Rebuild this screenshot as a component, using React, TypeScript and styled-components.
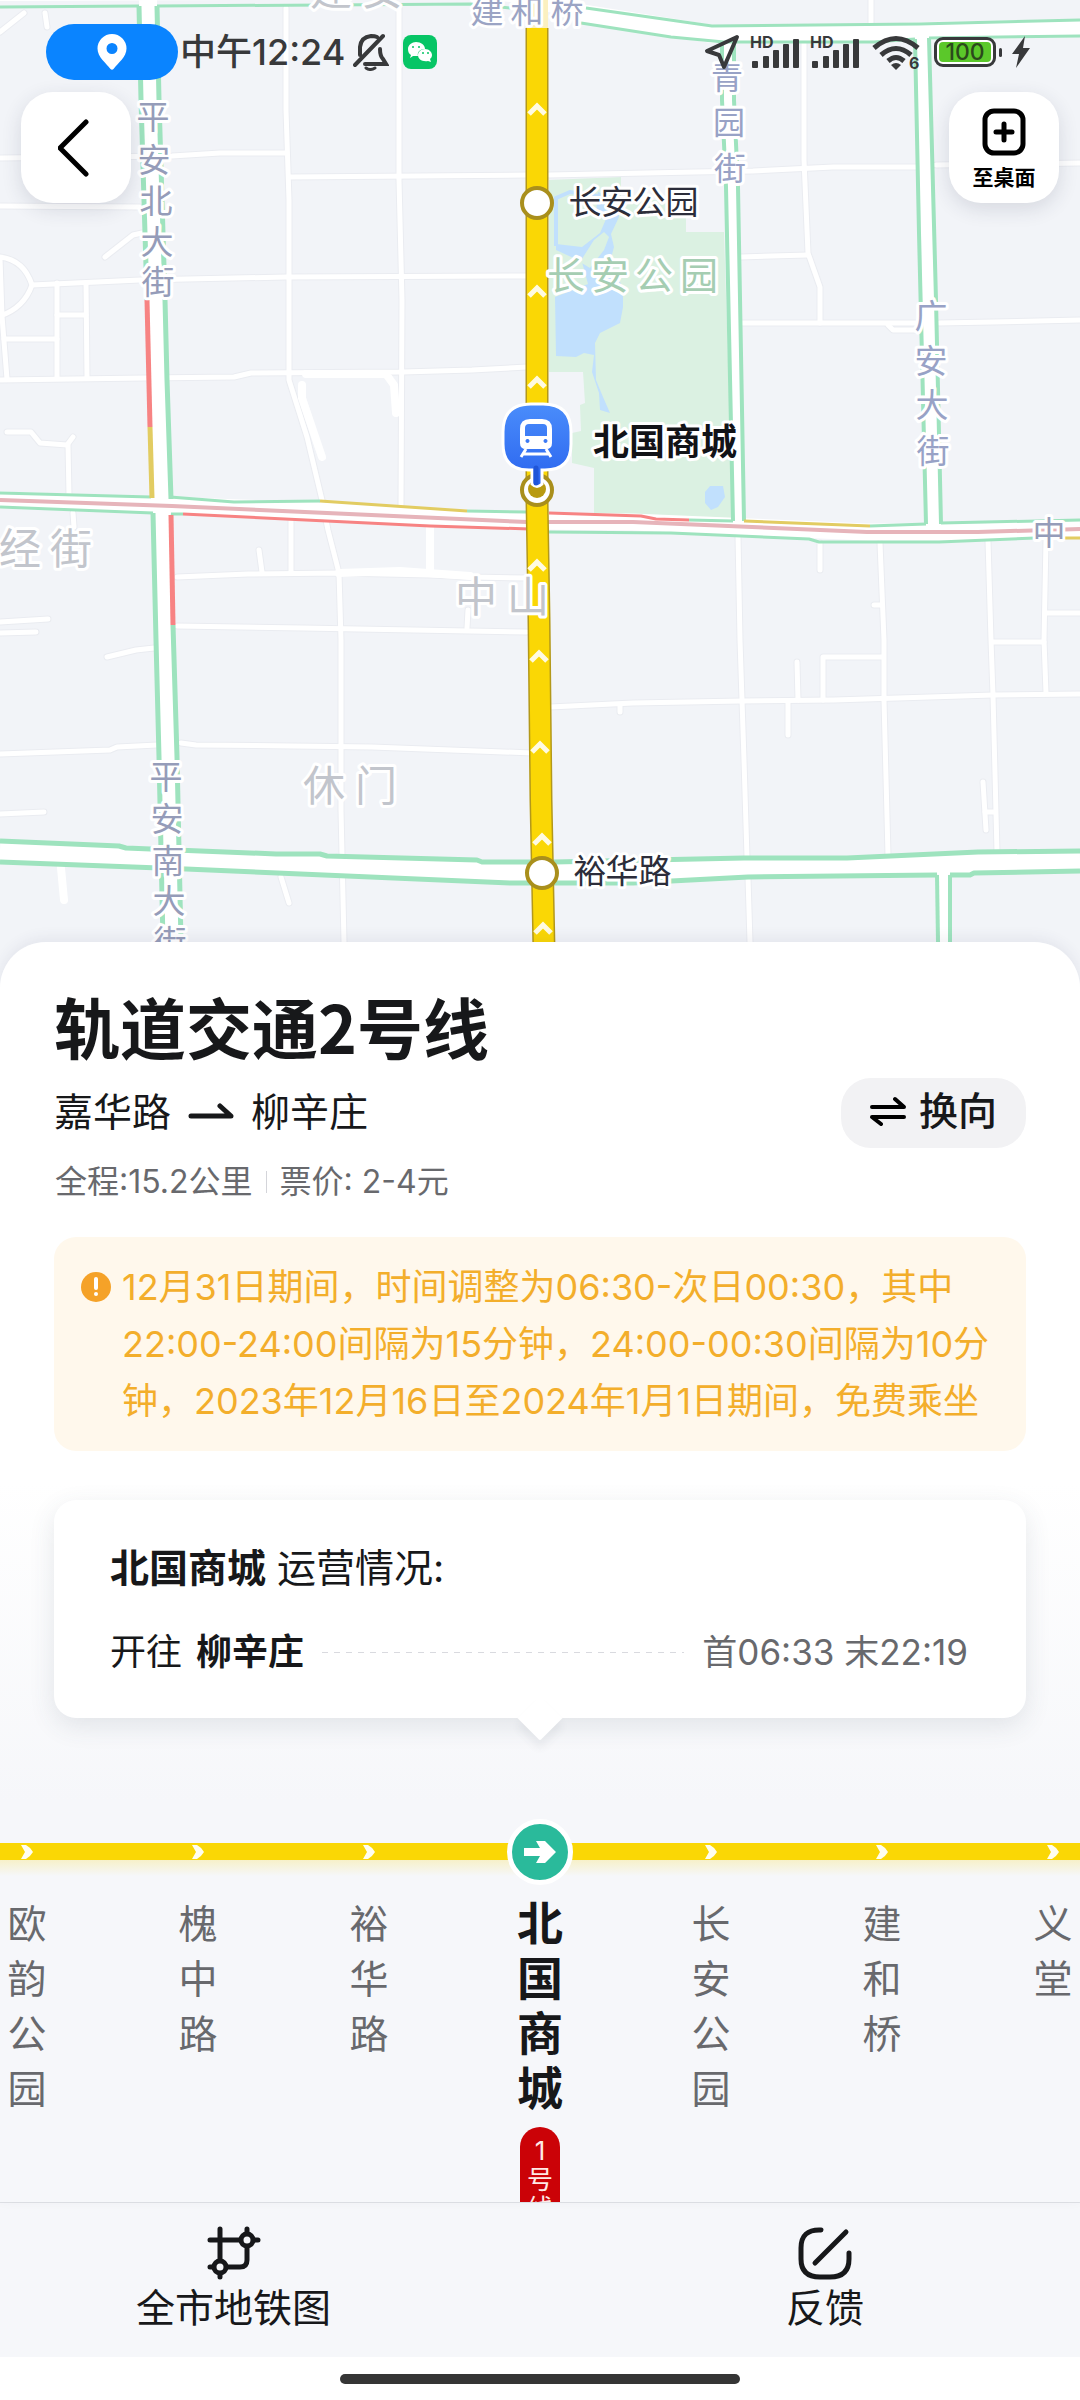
import React from "react";
import styled, { createGlobalStyle } from "styled-components";

const color = {
  ink: "#17181a",
  grey: "#68696d",
  status: "#38393b",
  land: "#f2f4f8",
  road: "#ffffff",
  flow: "#9ee3be",
  slow: "#e2cc62",
  jam: "#f78383",
  rail: "#e6b4ba",
  park: "#dbf1e2",
  water: "#c1e0fd",
  line: "#fad705",
  lineEdge: "#b3981a",
  active: "#2aba9b",
  notice: "#f3ae2b",
  page: "#f6f7fa",
};

const GlobalStyle = createGlobalStyle`
  * { box-sizing: border-box; }
  body {
    margin: 0;
    background: #fff;
    color: ${color.ink};
    font-family: Inter, "Noto Sans CJK SC", "Noto Sans", sans-serif;
  }
  button { font-family: inherit; color: inherit; border: 0; padding: 0; cursor: pointer; }
  h1, h2, p { margin: 0; font-weight: 400; }
`;

/* ---------- Screen ---------- */

const Screen = styled.div`
  display: flex;
  flex-direction: column;
  height: 100vh;
  overflow: hidden;
`;

const MapArea = styled.section`
  position: relative;
  flex: none;
  aspect-ratio: 1080 / 1002;
  background: ${color.land};
  overflow: hidden;
`;

const MapCanvas = styled.svg`
  display: block;
  width: 100%;
  height: 100%;
`;

const MapLabelText = styled.text<{ $bold?: boolean }>`
  font-family: "Noto Sans CJK SC", sans-serif;
  font-weight: ${(p) => (p.$bold ? 700 : 400)};
  text-anchor: middle;
  paint-order: stroke;
  stroke: #fff;
  stroke-width: 6px;
  stroke-linejoin: round;
`;

/* ---------- Map header ---------- */

const MapHeader = styled.header`
  position: absolute;
  inset: 0 0 auto 0;
  display: flex;
  flex-direction: column;
  gap: 12px;
  padding-top: 24px;
`;

const StatusBar = styled.div`
  display: flex;
  align-items: center;
  justify-content: space-between;
  height: 56px;
  padding: 0 50px 0 46px;
  color: ${color.status};
`;

const StatusGroup = styled.div<{ $gap: number }>`
  display: flex;
  align-items: center;
  gap: ${(p) => p.$gap}px;
`;

const LocationPill = styled.span`
  display: flex;
  align-items: center;
  justify-content: center;
  width: 132px;
  height: 56px;
  border-radius: 28px;
  background: #0a84ff;
`;

const Clock = styled.span`
  padding: 0 6px 0 0;
  font-size: 36px;
  font-weight: 500;
  line-height: 56px;
`;

const Battery = styled.span`
  display: flex;
  align-items: center;
  gap: 3px;
  &::after {
    content: "";
    width: 3px;
    height: 9px;
    border-radius: 2px;
    background: ${color.status};
  }
`;

const BatteryShell = styled.span`
  display: flex;
  width: 62px;
  height: 30px;
  padding: 2px;
  border: 3px solid ${color.status};
  border-radius: 9px;
  background: #fff;
`;

const BatteryLevel = styled.span`
  flex: 1;
  border-radius: 4px;
  background: #5bc82a;
  color: #2b4a1c;
  font-size: 23px;
  font-weight: 500;
  line-height: 20px;
  text-align: center;
`;

const SignalSvg = styled.svg`
  overflow: visible;
`;

const Toolbar = styled.div`
  display: flex;
  justify-content: space-between;
  padding: 0 21px;
`;

const FloatButton = styled.button`
  display: flex;
  flex-direction: column;
  align-items: center;
  justify-content: center;
  gap: 8px;
  width: 110px;
  height: 111px;
  border-radius: 32px;
  background: #fff;
  box-shadow: 0 6px 20px rgba(40, 50, 80, 0.14);
  color: #000;
  font-size: 21px;
  font-weight: 700;
  line-height: 28px;
`;

const ShortcutButton = styled(FloatButton)`
  padding-top: 5px;
`;

/* ---------- Sheet ---------- */

const Sheet = styled.main`
  position: relative;
  flex: 1;
  min-height: 0;
  display: flex;
  flex-direction: column;
  margin-top: -60px;
  padding-top: 43px;
  border-radius: 46px 46px 0 0;
  background: linear-gradient(#fff 540px, ${color.page} 860px);
  box-shadow: 0 -4px 14px rgba(60, 70, 100, 0.08);
  overflow: hidden;
`;

const SheetBody = styled.div`
  flex: none;
  padding: 0 54px;
`;

const Title = styled.h1`
  font-family: "Noto Sans CJK SC", sans-serif;
  font-size: 66px;
  font-weight: 700;
  line-height: 80px;
`;

const RouteRow = styled.div`
  display: flex;
  align-items: center;
  justify-content: space-between;
  margin-top: 13px;
`;

const Route = styled.p`
  display: flex;
  align-items: center;
  gap: 17px;
  padding-bottom: 2px;
  font-size: 39px;
  line-height: 54px;
`;

const SwapButton = styled.button`
  display: flex;
  align-items: center;
  gap: 13px;
  height: 70px;
  padding: 0 29px 4px;
  border-radius: 30px;
  background: #f2f2f4;
  font-size: 39px;
  font-weight: 500;
  line-height: 54px;
`;

const Facts = styled.p`
  display: flex;
  align-items: center;
  gap: 13px;
  margin-top: 12px;
  padding-left: 1px;
  color: ${color.grey};
  font-size: 32px;
  line-height: 44px;
`;

const Divider = styled.span`
  width: 1px;
  height: 22px;
  background: #d4d5da;
`;

const Notice = styled.section`
  display: flex;
  gap: 11px;
  margin-top: 33px;
  padding: 22px 24px 21px 27px;
  border-radius: 22px;
  background: #fff8ec;
  color: ${color.notice};
  font-size: 36px;
  line-height: 57px;
`;

const NoticeIcon = styled.svg`
  flex: none;
  margin-top: 13px;
`;

const Card = styled.section`
  display: flex;
  flex-direction: column;
  align-items: stretch;
  gap: 29px;
  position: relative;
  margin-top: 49px;
  padding: 40px 58px 39px 56px;
  border-radius: 22px;
  background: #fff;
  box-shadow: 0 8px 26px rgba(60, 70, 90, 0.12);
  &::after {
    content: "";
    position: absolute;
    left: calc(50% - 16px);
    bottom: -16px;
    width: 32px;
    height: 32px;
    border-radius: 0 0 2px 0;
    background: #fff;
    box-shadow: 6px 6px 8px rgba(60, 70, 90, 0.07);
    transform: rotate(45deg);
  }
`;

const CardHeading = styled.h2`
  font-size: 39px;
  line-height: 56px;
  strong { font-weight: 700; }
`;

const ServiceRow = styled.div`
  display: flex;
  align-items: center;
  gap: 14px;
  font-size: 36px;
  line-height: 54px;
  strong { font-weight: 700; }
`;

const Dashes = styled.span`
  flex: 1;
  height: 1px;
  margin: 0 4px;
  background: repeating-linear-gradient(90deg, #d9dadf 0 6px, transparent 6px 12px);
`;

const Times = styled.span`
  color: ${color.grey};
  font-size: 35px;
`;

/* ---------- Stop strip ---------- */

const Strip = styled.ol`
  flex: 1;
  min-height: 0;
  display: flex;
  justify-content: center;
  margin: 101px 0 0;
  padding: 0;
  list-style: none;
  overflow: hidden;
`;

const Stop = styled.li`
  flex: none;
  display: flex;
  flex-direction: column;
  align-items: center;
  gap: 11px;
  width: 171px;
`;

const Track = styled.span`
  display: flex;
  align-items: center;
  justify-content: center;
  width: 100%;
  height: 66px;
  background:
    linear-gradient(${color.line}, ${color.line}) 0 24px / 100% 17px no-repeat,
    linear-gradient(rgba(250, 215, 5, 0.2), rgba(250, 215, 5, 0)) 0 41px / 100% 16px no-repeat;
`;

const ActiveDot = styled.span`
  display: flex;
  align-items: center;
  justify-content: center;
  width: 66px;
  height: 66px;
  border: 5px solid #fff;
  border-radius: 50%;
  background: ${color.active};
`;

const StopName = styled.span<{ $active: boolean }>`
  width: 1em;
  color: ${(p) => (p.$active ? color.ink : color.grey)};
  font-size: ${(p) => (p.$active ? 46 : 39)}px;
  font-weight: ${(p) => (p.$active ? 700 : 400)};
  line-height: 55px;
  word-break: break-all;
`;

const TransferBadge = styled.span`
  width: 40px;
  padding: 9px 7px;
  border-radius: 20px;
  background: #cb0207;
  color: #ffe9e6;
  font-size: 26px;
  line-height: 29px;
  text-align: center;
  word-break: break-all;
`;

/* ---------- Bottom bar ---------- */

const BottomBar = styled.nav`
  flex: none;
  display: flex;
  justify-content: space-between;
  padding: 23px 216px 23px 136px;
  border-top: 1px solid #dfe1e5;
  background: ${color.page};
`;

const BarButton = styled.button`
  display: flex;
  flex-direction: column;
  align-items: center;
  gap: 2px;
  background: none;
  font-size: 39px;
  line-height: 52px;
`;

const HomeArea = styled.footer`
  flex: none;
  display: flex;
  justify-content: center;
  padding: 17px 0 16px;
  background: #fff;
`;

const HomeIndicator = styled.span`
  width: 37%;
  height: 10px;
  border-radius: 5px;
  background: #353535;
`;

/* ---------- Map data ---------- */

const minorRoads = [
  "M0 32 24 13", "M45 13 47 27", "M0 158 172 156 220 153 286 153", "M0 206 140 207",
  "M105 257 133 235 142 233", "M0 257Q24 260 32 285Q24 308 0 316", "M32 285 140 280 286 277 527 276",
  "M57 283V378", "M86 283 87 378", "M57 315H86", "M4 339H57", "M0 258 2 316 7 379",
  "M286 8V110L289 200V380L307 437 322 500 328 530 339 573 341 640V810L344 942", "M399 8V180L402 300 401 505",
  "M289 177 527 175", "M0 380 145 378 234 377 251 373 403 372 472 370 527 367",
  "M7 432H31L40 443 67 445 73 437", "M68 445 69 495", "M73 513 74 527",
  "M291 521V573", "M259 550 262 572", "M177 577 248 574 339 573 430 575 472 577 527 578",
  "M177 626 303 628 527 632", "M468 610 467 628", "M0 622 48 619", "M0 633 36 632",
  "M107 657 136 650 154 648", "M0 754 110 750 117 747 157 745", "M181 743 196 745 293 746 372 747 532 753",
  "M0 814 44 812", "M281 877 289 903", "M549 175 695 172 753 171 833 167 916 167", "M936 165 1080 163",
  "M871 0V24", "M804 43V160L808 253 820 287V323", "M741 257 808 255", "M742 323H920",
  "M888 325 893 330H916", "M939 323 993 322 1080 320", "M738 536 740 640 744 760 747 857",
  "M748 878 750 942", "M820 543V570", "M880 543 884 640 884 700 888 855", "M874 605H882",
  "M988 541 991 640 993 695 997 852", "M1046 540 1044 640 1046 693", "M1046 613H1080",
  "M550 707 633 703 742 701 834 700 993 695 1080 694", "M620 705V712", "M797 662 798 700", "M788 703V735",
  "M823 700V657H882", "M993 642H1044", "M983 782 986 830", "M985 812H995",
];

const wideLanes = ["M302 385V398L322 457", "M306 374H386L394 385 396 413", "M430 528V573", "M339 573 400 571 470 576", "M61 868 64 900"];

const arteries = [
  { d: "M0 -8 480 -10 520 -6 586 14 712 34 850 34 925 31 1080 28", w: 18 },
  { d: "M148 0 150 100 155 240 161 505 164 620 168 757 172 942", w: 18 },
  { d: "M728 40 729 100 732 187 738 525", w: 12 },
  { d: "M922 36 928 233 934 530", w: 14 },
  { d: "M0 500 160 505 320 511 530 521 633 522 867 532 978 532 1080 529", w: 17 },
  { d: "M0 851 160 858 320 866 530 873 640 873 744 868 960 864 1080 861", w: 20 },
  { d: "M944 870V942", w: 11 },
];

const traffic = [
  { c: color.flow, w: 3, d: ["M0 7 139 6", "M157 6 470 4 530 10", "M586 8 712 26 919 24 1080 20", "M581 23 671 37 724 42 874 42 915 39", "M929 38 1080 36"] },
  { c: color.flow, w: 5, d: ["M139 6 141 100 144 200 147 300", "M157 6 159 100 165 300 167 380 171 499", "M153 513 156 640 159 757 163 942", "M173 625 177 757 181 942"] },
  { c: color.flow, w: 4, d: ["M722 42V100L726 187 733 521", "M734 42V100L738 187 744 521", "M915 39 919 233 926 524", "M929 38 936 300 941 524"] },
  { c: color.flow, w: 3, d: ["M0 493 151 497", "M0 507 153 513", "M170 497 234 502 320 501", "M467 511 527 512", "M171 514H183", "M689 520 733 521", "M870 526 926 524", "M941 523 1080 520", "M549 532 671 533 809 539 819 542 939 542 1035 538"] },
  { c: color.flow, w: 5, d: ["M0 841 119 846 126 848 276 854 320 854 327 856 477 860 482 862 554 862 744 858 847 858 978 852 1080 851", "M0 862 186 869 510 883 633 883 748 877 937 875", "M950 875 970 875 974 873 1080 871"] },
  { c: color.flow, w: 4, d: ["M937 875 938 942", "M950 875V942"] },
  { c: color.rail, w: 4, d: ["M0 500 172 506 527 522 633 522 867 532 978 532 1080 529"] },
  { c: color.jam, w: 5, d: ["M147 300 150 427", "M171 515 173 625"] },
  { c: color.jam, w: 3, d: ["M183 514 430 526 530 529", "M549 513 641 516 656 519 689 520"] },
  { c: color.slow, w: 5, d: ["M150 427 152 498"] },
  { c: color.slow, w: 3, d: ["M320 501 467 511", "M744 521 870 526", "M1035 538H1080"] },
];

const lineArrows = [[537, 108], [537, 290], [537, 381], [537, 564], [539, 655], [540, 746], [542, 838], [543, 927]];

type MapLabel = { text: string; x: number[]; y: number[]; size: number; fill: string; bold?: boolean };

const STREET = "#959cb9";
const AREA = "#c2c5cc";
const labels: MapLabel[] = [
  { text: "建安", x: [331, 382], y: [-11, -11], size: 42, fill: AREA },
  { text: "建和桥", x: [487, 527, 567], y: [10, 10, 10], size: 33, fill: "#9ba4c4" },
  { text: "平安北大街", x: [153, 154, 156, 157, 158], y: [116, 159, 200, 241, 281], size: 33, fill: STREET },
  { text: "青园街", x: [727, 729, 730], y: [77, 122, 168], size: 32, fill: "#98a2c6" },
  { text: "广安大街", x: [931, 931, 932, 933], y: [315, 360, 404, 450], size: 33, fill: "#98a2c6" },
  { text: "中", x: [1049], y: [532], size: 33, fill: STREET },
  { text: "平安南大街", x: [166, 167, 168, 169, 170], y: [776, 818, 860, 900, 941], size: 33, fill: STREET },
  { text: "经街", x: [20, 71], y: [548, 548], size: 42, fill: AREA },
  { text: "中山", x: [476, 528], y: [596, 596], size: 42, fill: AREA },
  { text: "休门", x: [324, 376], y: [785, 785], size: 42, fill: AREA },
  { text: "长安公园", x: [566, 610, 654, 699], y: [275, 275, 275, 275], size: 38, fill: "#a5cdb2" },
  { text: "长安公园", x: [585, 617, 649, 682], y: [201, 201, 201, 201], size: 33, fill: "#2c2d3a" },
  { text: "北国商城", x: [611, 647, 683, 719], y: [441, 441, 441, 441], size: 36, fill: "#121317", bold: true },
  { text: "裕华路", x: [590, 622, 655], y: [870, 870, 870], size: 33, fill: "#2c2d3a" },
];

function TransitMap() {
  return (
    <MapCanvas viewBox="0 0 1080 1002" preserveAspectRatio="xMidYMin slice" role="img" aria-label="北国商城站周边地图">
      <defs>
        <linearGradient id="pin" x1="0" y1="0" x2="0" y2="1">
          <stop offset="0" stopColor="#4a8dfb" />
          <stop offset="1" stopColor="#2a63ee" />
        </linearGradient>
      </defs>
      <path fill={color.park} d="M549 180 621 177V200H686V232H724L733 521 594 514V468L572 463V433L581 431 580 405 585 403 583 372H549Z" />
      <path fill={color.water} d="M598 192 619 200 619 217 611 234 614 247 610 262 623 288 623 307 620 323 600 333 595 343 596 380 603 397 610 413 600 410 599 393 592 372 594 355 584 353 576 357 556 356 555 297 588 284 582 262 556 250 556 244 582 247 600 233 606 219 596 212Z" />
      <path fill="none" stroke={color.water} strokeWidth="4" d="M598 196 570 192 556 198V246" />
      <path fill={color.park} d="M580 262 594 240 604 232 609 237 604 250 590 268Z" />
      <path fill={color.water} d="M710 486H723L725 497 718 507 711 510 705 503V492Z" />

      <g fill="none" strokeLinecap="round" strokeLinejoin="round">
        <g stroke="#eaecf1" strokeWidth="7">
          {minorRoads.map((d) => <path key={d} d={d} />)}
        </g>
        <g stroke={color.road} strokeWidth="5">
          {minorRoads.map((d) => <path key={d} d={d} />)}
        </g>
        <g stroke={color.road} strokeWidth="8">
          {wideLanes.map((d) => <path key={d} d={d} />)}
        </g>
      </g>
      <g fill="none" stroke={color.road}>
        {arteries.map((a) => <path key={a.d} d={a.d} strokeWidth={a.w} />)}
      </g>
      <g fill="none" strokeLinejoin="round">
        {traffic.map((t) => t.d.map((d) => <path key={d} d={d} stroke={t.c} strokeWidth={t.w} />))}
      </g>

      <g fill="none">
        <path d="M537 0V28" stroke="#fbf0c0" strokeWidth="22" />
        <path d="M537 28V500L539 620 541 800 544 950" stroke={color.lineEdge} strokeWidth="23" />
        <path d="M537 28V500L539 620 541 800 544 950" stroke={color.line} strokeWidth="20" />
        {lineArrows.map(([x, y]) => (
          <path key={y} d={`M${x - 8} ${y + 6} ${x} ${y - 2} ${x + 8} ${y + 6}`} stroke="#fffbe2" strokeWidth="5" />
        ))}
      </g>

      {labels.map((l) => (
        <MapLabelText
          key={l.text + l.size}
          $bold={l.bold}
          fontSize={l.size}
          fill={l.fill}
          x={l.x.join(" ")}
          y={l.y.map((v) => Math.round(v + l.size * 0.38)).join(" ")}
        >
          {l.text}
        </MapLabelText>
      ))}

      <g stroke="#a98f1c" strokeWidth="4" fill="#fff">
        <circle cx="537" cy="203" r="15" />
        <circle cx="542" cy="873" r="15" />
        <circle cx="537" cy="490" r="15" />
      </g>
      <circle cx="537" cy="489" r="9" fill="#b89a10" />
      <path d="M531 404h12q28 0 28 28v12q0 26-26 26h-3v14q-5 5-10 0v-14h-3q-26 0-26-26v-12q0-28 28-28z" fill="url(#pin)" stroke="#fff" strokeWidth="3" />
      <path d="M536 468v15" stroke="#1f55d8" strokeWidth="5" strokeLinecap="round" />
      <path fill="#fff" fillRule="evenodd" d="M530 419h12q10 0 10 10v14q0 6-6 6h-20q-6 0-6-6v-14q0-10 10-10zm-1 5q-4 0-4 4v8h22v-8q0-4-4-4zM527 439a2 2 0 1 0 1 0zM545 439a2 2 0 1 0 1 0z" />
      <path d="M526 449 521 457M546 449 551 457M523 454H549" stroke="#fff" strokeWidth="3" />
    </MapCanvas>
  );
}

/* ---------- Icons ---------- */

const SignalIcon = () => (
  <SignalSvg width="50" height="34" viewBox="0 0 50 34" fill={color.status}>
    <text x="0" y="13" fontFamily="Inter, sans-serif" fontSize="16" fontWeight="700">HD</text>
    <rect x="2" y="26" width="6" height="7" rx="1" />
    <rect x="13" y="21" width="6" height="12" rx="1" />
    <rect x="23" y="15" width="6" height="18" rx="1" />
    <rect x="33" y="9" width="6" height="24" rx="1" />
    <rect x="43" y="4" width="6" height="29" rx="1" />
  </SignalSvg>
);

const stops = [
  { name: "欧韵公园" },
  { name: "槐中路" },
  { name: "裕华路" },
  { name: "北国商城", active: true, transfer: "1号线" },
  { name: "长安公园" },
  { name: "建和桥" },
  { name: "义堂" },
];

export default function App() {
  return (
    <Screen>
      <GlobalStyle />
      <MapArea>
        <TransitMap />
        <MapHeader>
          <StatusBar>
            <StatusGroup $gap={2}>
              <LocationPill>
                <svg width="30" height="36" viewBox="0 0 30 36">
                  <path fill="#fff" fillRule="evenodd" d="M15 0a14.500 14.500 0 0 1 14.500 14.500C29.500 23 21 29 16.500 35q-1.500 1.500-3 0C9 29 .5 23 .5 14.500A14.500 14.500 0 0 1 15 0zm0 9a5.500 5.500 0 1 0 0 11 5.500 5.500 0 0 0 0-11z" />
                </svg>
              </LocationPill>
              <Clock>中午12:24</Clock>
              <StatusGroup $gap={14}>
                <svg width="36" height="38" viewBox="0 0 36 38" fill="none" stroke={color.status} strokeWidth="4" strokeLinecap="round">
                  <path d="M2 32 30 3M7 22V14Q8 4 18 3q4 0 6 1M27 16q0 7 3 10l3 5H12" />
                  <path d="M13 35q4 3 9 0" strokeWidth="3" />
                </svg>
                <svg width="34" height="34" viewBox="0 0 34 34">
                  <rect width="34" height="34" rx="8" fill="#07c566" />
                  <path fill="#fff" d="M13 7c5 0 9 3 9 7-5 0-8 3-7 7l-5 0-3 2 1-3c-2-1-3-3-3-6 0-4 4-7 8-7z" />
                  <path fill="#fff" d="M22 14c4 0 7 3 7 6 0 2-1 3-2 4l1 3-3-1c-6 1-10-2-10-6 0-3 3-6 7-6z" />
                  <g fill="#07c566"><circle cx="10" cy="12" r="1" /><circle cx="16" cy="12" r="1" /><circle cx="20" cy="18" r="1" /><circle cx="25" cy="18" r="1" /></g>
                </svg>
              </StatusGroup>
            </StatusGroup>
            <StatusGroup $gap={10}>
              <svg width="36" height="36" viewBox="0 0 36 36" fill="none" stroke={color.status} strokeWidth="4" strokeLinejoin="round">
                <path d="M33 3 3 17 15 21 20 33Z" />
              </svg>
              <SignalIcon />
              <SignalIcon />
              <svg width="54" height="36" viewBox="0 0 54 36" fill="none" stroke={color.status} strokeWidth="5">
                <path d="M4 14Q26-5 48 14M11 21Q26 8 41 21M18 27Q26 20 34 27" />
                <path d="M21 31Q26 27 31 31L26 36Z" fill={color.status} stroke="none" />
                <text x="39" y="35" fontFamily="Inter, sans-serif" fontSize="16" fontWeight="700" fill={color.status} stroke="none">6</text>
              </svg>
              <Battery>
                <BatteryShell>
                  <BatteryLevel>100</BatteryLevel>
                </BatteryShell>
              </Battery>
              <svg width="18" height="32" viewBox="0 0 18 32" fill={color.status}>
                <path d="M13 0 0 18H7L4 32 18 12H11Z" />
              </svg>
            </StatusGroup>
          </StatusBar>
          <Toolbar>
            <FloatButton aria-label="返回">
              <svg width="36" height="58" viewBox="0 0 36 58" fill="none" stroke="#000" strokeWidth="5" strokeLinecap="round" strokeLinejoin="round">
                <path d="M28 3 2 29 28 55" />
              </svg>
            </FloatButton>
            <ShortcutButton>
              <svg width="44" height="48" viewBox="0 0 44 48" fill="none" stroke="#000" strokeWidth="5" strokeLinecap="round">
                <rect x="3" y="3" width="38" height="42" rx="9" />
                <path d="M14 24H30M22 16V32" />
              </svg>
              至桌面
            </ShortcutButton>
          </Toolbar>
        </MapHeader>
      </MapArea>

      <Sheet>
        <SheetBody>
          <Title>轨道交通2号线</Title>
          <RouteRow>
            <Route>
              <span>嘉华路</span>
              <svg width="46" height="18" viewBox="0 0 46 18" fill="none" stroke={color.ink} strokeWidth="5" strokeLinecap="round" strokeLinejoin="round" aria-label="至">
                <path d="M3 13H43L32 3" />
              </svg>
              <span>柳辛庄</span>
            </Route>
            <SwapButton>
              <svg width="36" height="30" viewBox="0 0 36 30" fill="none" stroke="#000" strokeWidth="4" strokeLinecap="round" strokeLinejoin="round">
                <path d="M2 11H34L25 3M34 21H2L11 28" />
              </svg>
              换向
            </SwapButton>
          </RouteRow>
          <Facts>
            <span>全程:15.2公里</span>
            <Divider />
            <span>票价: 2-4元</span>
          </Facts>

          <Notice>
            <NoticeIcon width="30" height="30" viewBox="0 0 30 30">
              <circle cx="15" cy="15" r="15" fill="#f5a228" />
              <path d="M15 7V16" stroke="#fff" strokeWidth="4" strokeLinecap="round" />
              <circle cx="15" cy="22" r="2" fill="#fff" />
            </NoticeIcon>
            <p>12月31日期间，时间调整为06:30-次日00:30，其中22:00-24:00间隔为15分钟，24:00-00:30间隔为10分钟，2023年12月16日至2024年1月1日期间，免费乘坐</p>
          </Notice>

          <Card>
            <CardHeading>
              <strong>北国商城</strong> 运营情况:
            </CardHeading>
            <ServiceRow>
              <span>开往</span>
              <strong>柳辛庄</strong>
              <Dashes />
              <Times>首06:33 末22:19</Times>
            </ServiceRow>
          </Card>
        </SheetBody>

        <Strip>
          {stops.map((s) => (
            <Stop key={s.name}>
              <Track>
                {s.active ? (
                  <ActiveDot>
                    <svg width="34" height="24" viewBox="0 0 34 24" fill="#fff">
                      <path d="M1 8H17L13 1H22L33 12 22 23H13L17 16H1Z" />
                    </svg>
                  </ActiveDot>
                ) : (
                  <svg width="14" height="14" viewBox="0 0 14 14" fill="#fffef0">
                    <path d="M1 0H6Q10 2 13 7 10 12 6 14H1L5 7Z" />
                  </svg>
                )}
              </Track>
              <StopName $active={!!s.active}>{s.name}</StopName>
              {s.transfer && <TransferBadge>{s.transfer}</TransferBadge>}
            </Stop>
          ))}
        </Strip>
      </Sheet>

      <BottomBar>
        <BarButton>
          <svg width="54" height="54" viewBox="0 0 54 54" fill="none" stroke={color.ink} strokeWidth="5" strokeLinecap="round">
            <path d="M3 14H33M47 14H51M13 3V34M40 3V6M3 41H6M13 48V51M20 41H33Q40 41 40 34V21" />
            <circle cx="40" cy="14" r="6" />
            <circle cx="13" cy="41" r="6" />
          </svg>
          全市地铁图
        </BarButton>
        <BarButton>
          <svg width="54" height="54" viewBox="0 0 54 54" fill="none" stroke={color.ink} strokeWidth="5" strokeLinecap="round">
            <path d="M23 4Q3 3 3 22V33Q3 51 22 51H32Q51 51 51 33V27M48 6 17 37" />
          </svg>
          反馈
        </BarButton>
      </BottomBar>
      <HomeArea>
        <HomeIndicator />
      </HomeArea>
    </Screen>
  );
}
